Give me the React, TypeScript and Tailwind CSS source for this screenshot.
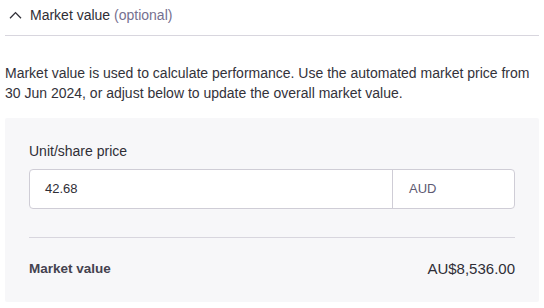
export default function App() {
  return (
    <div className="w-[544px] h-[308px] bg-white px-[5px] text-[#2f2e36]" style={{ fontFamily: '"Liberation Sans", Arial, sans-serif' }}>
      <div className="h-[36px] pb-[6px] border-b border-[#d8d6de] flex items-center">
        <svg width="13" height="8" viewBox="0 0 13 8" className="ml-[4px] mr-[8px]" fill="none">
          <path d="M1 7.2 L6.5 1.6 L12 7.2" stroke="#2f2e36" strokeWidth="1.3" />
        </svg>
        <span className="text-[14px] leading-[20px]">
          Market value <span className="text-[#76708f]">(optional)</span>
        </span>
      </div>
      <p className="mt-[27px] mb-[15px] pr-[6px] text-[14px] leading-[20px] text-[#33323a]">
        Market value is used to calculate performance. Use the automated market price from 30 Jun 2024, or adjust below to update the overall market value.
      </p>
      <div className="bg-[#f7f7f9] px-[24px] pt-[23px] h-[184px] rounded-[2px]">
        <div className="text-[14px] leading-[20px] text-[#2f2e36]">Unit/share price</div>
        <div className="mt-[8px] h-[40px] flex border border-[#cfcdd6] rounded-[4px] bg-white">
          <div className="flex-1 flex items-center pl-[15px] text-[13px] text-[#2f2e36]">42.68</div>
          <div className="w-[122px] border-l border-[#cfcdd6] flex items-center pl-[16px] text-[13px] text-[#5e5a72]">AUD</div>
        </div>
        <div className="mt-[28px] border-t border-[#d8d6de]" />
        <div className="flex items-center justify-between h-[62px]">
          <span className="text-[13.5px] font-semibold text-[#44424f]">Market value</span>
          <span className="text-[15px] text-[#2f2e36]">AU$8,536.00</span>
        </div>
      </div>
    </div>
  );
}
